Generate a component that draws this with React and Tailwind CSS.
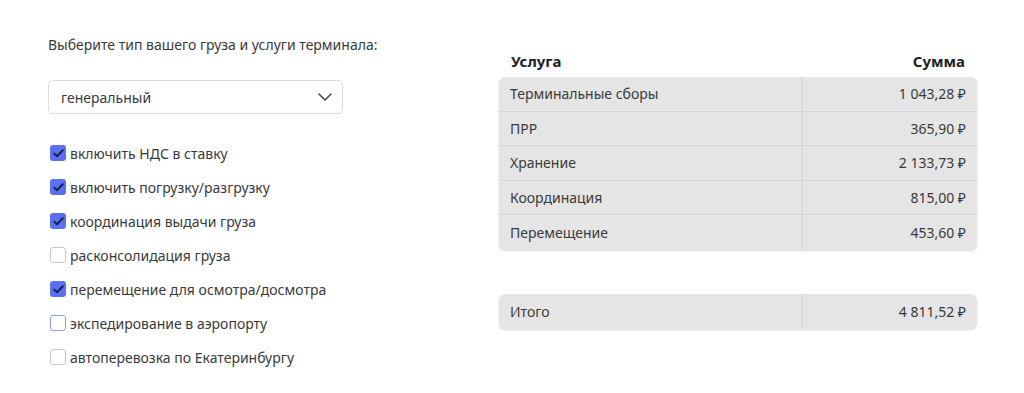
const options = [
  { label: 'включить НДС в ставку', checked: true },
  { label: 'включить погрузку/разгрузку', checked: true },
  { label: 'координация выдачи груза', checked: true },
  { label: 'расконсолидация груза', checked: false },
  { label: 'перемещение для осмотра/досмотра', checked: true },
  { label: 'экспедирование в аэропорту', checked: false, focus: true },
  { label: 'автоперевозка по Екатеринбургу', checked: false },
]

const rows = [
  ['Терминальные сборы', '1 043,28 ₽'],
  ['ПРР', '365,90 ₽'],
  ['Хранение', '2 133,73 ₽'],
  ['Координация', '815,00 ₽'],
  ['Перемещение', '453,60 ₽'],
]

function Box({ checked, focus }) {
  if (checked) {
    return (
      <span className="w-4 h-4 rounded-[3px] bg-[#5b6ff2] flex items-center justify-center shrink-0">
        <svg width="11" height="9" viewBox="0 0 11 9" fill="none">
          <path d="M1.2 4.6L4 7.3L9.8 1.3" stroke="#16224f" strokeWidth="2" strokeLinecap="round" strokeLinejoin="round" />
        </svg>
      </span>
    )
  }
  return (
    <span className={`w-4 h-4 rounded-[3px] bg-white border shrink-0 ${focus ? 'border-[#8d9cf0]' : 'border-[#c8c8c8]'}`} />
  )
}

function Row({ name, sum, last }) {
  return (
    <div className={`flex items-center h-[34.6px] ${last ? '' : 'border-b border-[#d6d6d6]'}`}>
      <div className="w-[304px] h-full flex items-center px-[11px] border-r-2 border-[#dadada]">{name}</div>
      <div className="flex-1 h-full flex items-center justify-end px-[11px]">{sum}</div>
    </div>
  )
}

export default function App() {
  return (
    <div className="w-[1024px] h-[393px] bg-white text-[#3a3a3a] text-[14px] flex" style={{ fontFamily: '"Noto Sans", sans-serif' }}>
      <div className="pl-[48px] pt-[35px] w-[499px]">
        <p className="leading-[20px]">Выберите тип вашего груза и услуги терминала:</p>
        <div className="mt-[25px] w-[295px] h-[34px] border border-[#dcdcdc] rounded-[5px] flex items-center justify-between pl-[12px] pr-[10px]">
          <span>генеральный</span>
          <svg width="14" height="8" viewBox="0 0 14 8" fill="none">
            <path d="M1 1L7 7L13 1" stroke="#444" strokeWidth="1.5" strokeLinecap="round" strokeLinejoin="round" />
          </svg>
        </div>
        <div className="mt-[22px] flex flex-col pl-[2px]">
          {options.map((o) => (
            <label key={o.label} className="h-[34px] flex items-center gap-[4px]">
              <Box checked={o.checked} focus={o.focus} />
              <span>{o.label}</span>
            </label>
          ))}
        </div>
      </div>
      <div className="pt-[50px] w-[478px]">
        <div className="flex justify-between px-[12px] h-[22px] items-center text-[15px] font-bold text-[#222]">
          <span>Услуга</span>
          <span>Сумма</span>
        </div>
        <div className="mt-[5px] bg-[#e5e5e5] rounded-[6px] shadow-[0_1px_2px_rgba(0,0,0,0.15)] overflow-hidden">
          {rows.map(([n, s], i) => (
            <Row key={n} name={n} sum={s} last={i === rows.length - 1} />
          ))}
        </div>
        <div className="mt-[44px] bg-[#e5e5e5] rounded-[6px] shadow-[0_1px_2px_rgba(0,0,0,0.15)] overflow-hidden">
          <Row name="Итого" sum="4 811,52 ₽" last />
        </div>
      </div>
    </div>
  )
}
